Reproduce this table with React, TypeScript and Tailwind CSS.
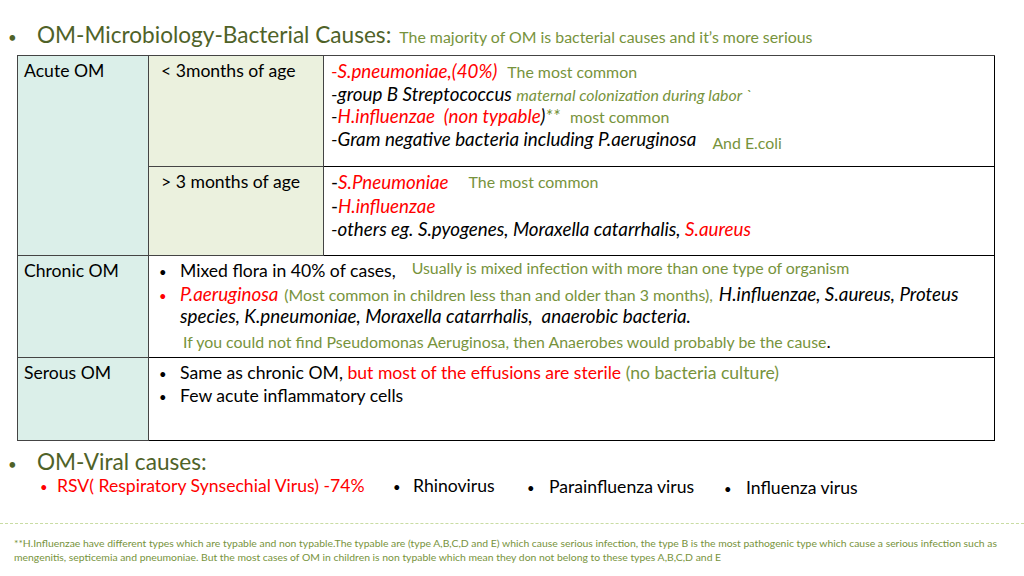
import React from 'react';

const green = 'text-[#77933c]';
const red = 'text-[#ff0000]';

// one text line of the table, fixed height so mixed font sizes don't push lines apart
const Line: React.FC<{ className?: string; children: React.ReactNode }> = ({ className = '', children }) => (
  <div className={`h-[22.7px] whitespace-nowrap leading-[22.7px] ${className}`}>{children}</div>
);

const Dot: React.FC<{ color?: string; w?: string }> = ({ color = 'text-black', w = 'w-[21px]' }) => (
  <span className={`inline-block ${w} shrink-0 text-[13px] ${color}`}>•</span>
);

const App: React.FC = () => {
  return (
    <div
      className="relative w-[1024px] h-[576px] overflow-hidden bg-white text-black"
      style={{ fontFamily: 'Lato, "Open Sans", sans-serif' }}
    >
      {/* heading */}
      <div className="flex h-[30px] items-baseline pt-[20px] pl-[8px] leading-[30px] box-content">
        <span className="w-[29px] text-[15px] text-[#4f6228]">•</span>
        <span className="text-[22.6px] text-[#4f6228]">OM-Microbiology-Bacterial Causes</span>
        <span className="text-[22.6px] text-[#4f6228]">:</span>
        <span className={`ml-[8px] text-[15.9px] ${green}`}>The majority of OM is bacterial causes and it’s more serious</span>
      </div>

      {/* table */}
      <div className="ml-[17px] mt-[5px] grid w-[978px] grid-cols-[131px_175px_1fr] grid-rows-[111px_89px_102px_83px] border-l border-t border-[#444] text-[17.6px]">
        <div className="row-span-2 border-b border-r border-[#444] bg-[#dbefe9] pl-[6px] pt-[4px]">
          <Line>Acute OM</Line>
        </div>
        <div className="border-b border-r border-[#444] bg-[#ebf1de] pl-[12px] pt-[4px]">
          <Line>&lt; 3months of age</Line>
        </div>
        <div className="border-b border-r border-black pl-[7px] pt-[4px] text-[18.8px] italic">
          <Line>
            <span className={red}>-S.pneumoniae,(40%)</span>
            <span className={`ml-[10px] text-[15.9px] not-italic ${green}`}>The most common</span>
          </Line>
          <Line>
            -group B Streptococcus <span className={`text-[15.9px] ${green}`}>maternal colonization during labor `</span>
          </Line>
          <Line>
            -<span className={red}>H.influenzae&nbsp; (non typable</span>)<span className={green}>**</span>
            <span className={`ml-[10px] text-[15.9px] not-italic ${green}`}>most common</span>
          </Line>
          <Line>
            -Gram negative bacteria including P.aeruginosa
            <span className={`relative top-[3px] ml-[16px] text-[15.9px] not-italic ${green}`}>And E.coli</span>
          </Line>
        </div>

        <div className="border-b border-r border-[#444] bg-[#ebf1de] pl-[12px] pt-[4px]">
          <Line>&gt; 3 months of age</Line>
        </div>
        <div className="border-b border-r border-black pl-[7px] pt-[4px] text-[18.8px] italic">
          <Line className="h-[23.5px]">
            <span className="not-italic">-</span>
            <span className={red}>S.Pneumoniae</span>
            <span className={`relative -top-[1px] ml-[20px] text-[15.9px] not-italic ${green}`}>The most common</span>
          </Line>
          <Line className="h-[23.5px]">
            <span className="not-italic">-</span>
            <span className={red}>H.influenzae</span>
          </Line>
          <Line>
            -others eg. S.pyogenes, Moraxella catarrhalis, <span className={red}>S.aureus</span>
          </Line>
        </div>

        <div className="border-b border-r border-[#444] bg-[#dbefe9] pl-[6px] pt-[4px]">
          <Line>Chronic OM</Line>
        </div>
        <div className="col-span-2 border-b border-r border-black pl-[10px] pt-[4px]">
          <Line>
            <Dot />
            Mixed flora in 40% of cases,
            <span className={`relative -top-[3px] ml-[16px] text-[15.9px] ${green}`}>
              Usually is mixed infection with more than one type of organism
            </span>
          </Line>
          <Line>
            <Dot color={red} />
            <span className={`text-[18.8px] italic ${red}`}>P.aeruginosa</span>
            <span className={`ml-[6px] text-[15.9px] ${green}`}>(Most common in children less than and older than 3 months),</span>
            <span className="ml-[6px] text-[18.8px] italic">H.influenzae, S.aureus, Proteus</span>
          </Line>
          <Line className="pl-[21px] text-[18.8px] italic">
            species, K.pneumoniae, Moraxella catarrhalis,&nbsp; anaerobic bacteria.
          </Line>
          <Line className={`mt-[2px] pl-[24px] text-[15.9px] ${green}`}>
            If you could not find Pseudomonas Aeruginosa, then Anaerobes would probably be the cause
            <span className="text-[18px] text-black">.</span>
          </Line>
        </div>

        <div className="border-b border-r border-[#444] bg-[#dbefe9] pl-[6px] pt-[4px]">
          <Line>Serous OM</Line>
        </div>
        <div className="col-span-2 border-b border-r border-black pl-[10px] pt-[4px]">
          <Line>
            <Dot />
            Same as chronic OM, <span className={red}>but most of the effusions are sterile</span>{' '}
            <span className={green}>(no bacteria culture)</span>
          </Line>
          <Line>
            <Dot />
            Few acute inflammatory cells
          </Line>
        </div>
      </div>

      {/* viral */}
      <div className="mt-[6px] flex h-[30px] items-baseline pl-[8px] leading-[30px]">
        <span className="w-[29px] text-[15px] text-[#4f6228]">•</span>
        <span className="text-[22.6px] text-[#4f6228]">OM-Viral causes:</span>
      </div>
      <div className="-mt-[3px] flex h-[23px] items-baseline whitespace-nowrap pl-[40px] text-[17.6px] leading-[23px]">
        <div className="w-[353px]">
          <Dot color={red} w="w-[17px]" />
          <span className={red}>RSV( Respiratory Synsechial Virus) -74%</span>
        </div>
        <div className="w-[134px]">
          <Dot w="w-[20px]" />
          Rhinovirus
        </div>
        <div className="relative top-[1px] w-[197px]">
          <Dot w="w-[22px]" />
          Parainfluenza virus
        </div>
        <div className="relative top-[2px]">
          <Dot w="w-[22px]" />
          Influenza virus
        </div>
      </div>

      {/* footnote */}
      <div className="mt-[26px] border-t border-dashed border-[#c9dca3]" />
      <div className={`mt-[12px] pl-[14px] pr-[10px] text-[10.4px] leading-[14px] ${green}`}>
        **H.Influenzae have different types which are typable and non typable.The typable are (type A,B,C,D and E) which cause serious infection, the type B is the most pathogenic type which cause a serious infection such as mengenitis, septicemia and pneumoniae. But the most cases of OM in children is non typable which mean they don not belong to these types A,B,C,D and E
      </div>
    </div>
  );
};

export default App;
